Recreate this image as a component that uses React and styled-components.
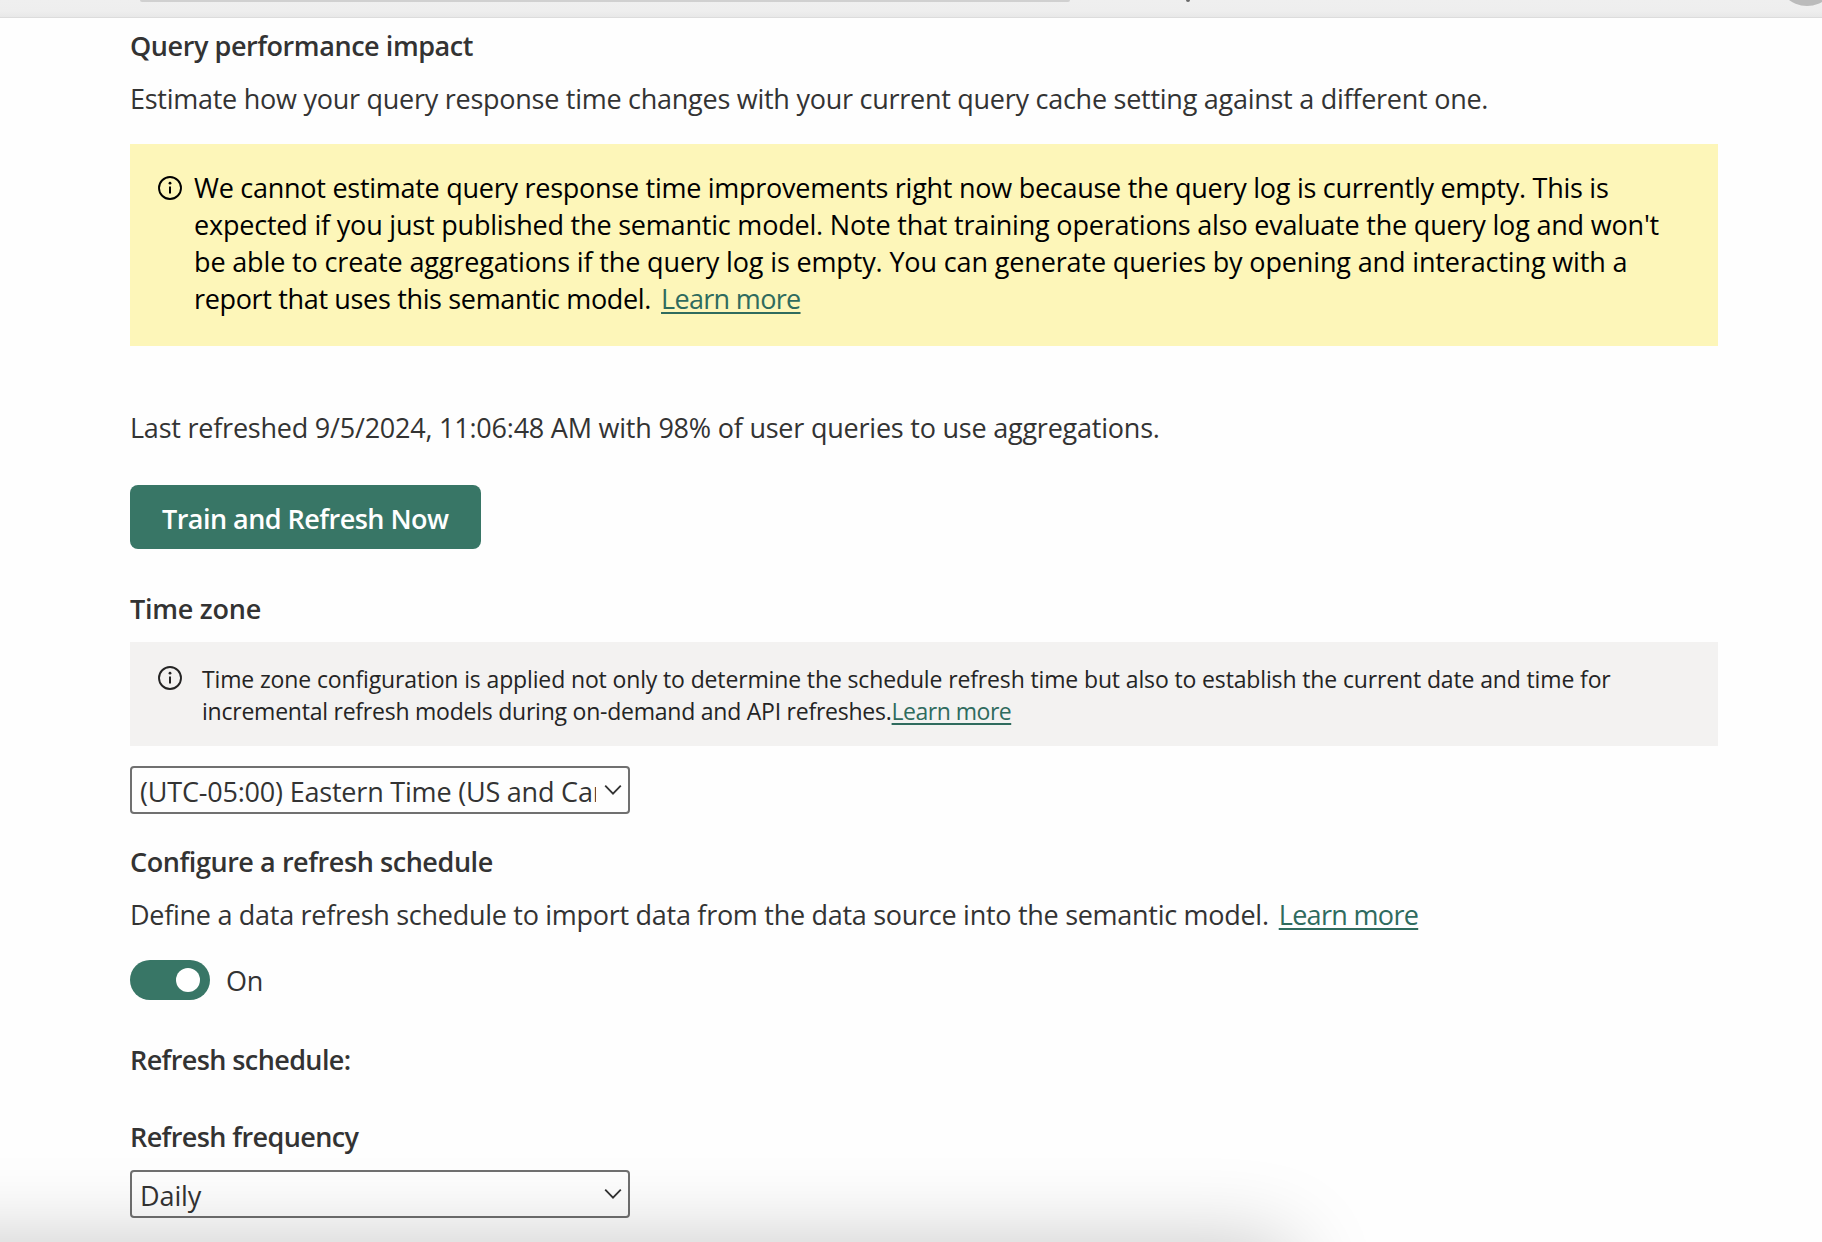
import React, { useState } from 'react';
import styled, { createGlobalStyle } from 'styled-components';

const GlobalStyle = createGlobalStyle`
  * { box-sizing: border-box; }
  html, body { margin: 0; padding: 0; background: #fefefe; }
  body {
    font-family: 'Open Sans', 'Noto Sans', sans-serif;
    font-size: 27px;
    line-height: 37px;
    color: #333333;
  }
`;

const Page = styled.div`
  position: relative;
  height: 1242px;
  overflow: hidden;
  display: flex;
  flex-direction: column;
`;

const TopBar = styled.header`
  flex: none;
  display: flex;
  align-items: flex-start;
  height: 18px;
  padding-left: 140px;
  background: linear-gradient(#efefef 0, #eeeeee 11px, #e8e8e8 17px);
  border-bottom: 1px solid #dcdcdc;
  position: relative;
`;

const AddressField = styled.div`
  width: 930px;
  height: 2px;
  background: #d0d0d0;
  border-radius: 0 0 6px 6px;
`;

const BarGlyph = styled.div`
  width: 4px;
  height: 2px;
  margin-left: 116px;
  background: #6a6a6a;
  border-radius: 0 0 2px 2px;
`;

const ProfileAvatar = styled.div`
  position: absolute;
  top: -54px;
  left: 1777px;
  width: 60px;
  height: 60px;
  border-radius: 50%;
  background: #bbbbbb;
`;

const BarClip = styled.div`
  position: absolute;
  inset: 0;
  overflow: hidden;
`;

const Content = styled.main`
  display: flex;
  flex-direction: column;
  align-items: flex-start;
  width: 1718px;
  padding: 9px 0 0 130px;
`;

const Heading = styled.h2`
  margin: ${(p) => p.$top || 0}px 0 0;
  font-size: 27px;
  line-height: 37px;
  font-weight: 600;
  letter-spacing: ${(p) => p.$track}px;
  white-space: nowrap;
`;

const Paragraph = styled.p`
  display: flex;
  margin: ${(p) => p.$top}px 0 0;
  letter-spacing: ${(p) => p.$track}px;
  white-space: nowrap;
`;

const Link = styled.a`
  margin-left: ${(p) => p.$gap || 0}px;
  color: #2f6b5e;
  letter-spacing: ${(p) => p.$track}px;
  text-decoration: underline;
  text-decoration-thickness: 2px;
  text-underline-offset: 3px;
  text-decoration-skip-ink: none;
`;

const Notice = styled.section`
  display: flex;
  align-items: flex-start;
  align-self: stretch;
  gap: 12px;
  height: 202px;
  margin-top: 27px;
  padding: 25px 28px;
  background: #fdf6b9;
  color: #000000;
`;

const Hint = styled(Notice)`
  gap: 20px;
  height: 104px;
  margin-top: 15px;
  padding: 21px 28px;
  background: #f3f2f1;
  color: #242424;
  font-size: 23px;
  line-height: 32px;
`;

const IconBox = styled.svg`
  flex: none;
  width: 24px;
  height: 24px;
  margin-top: ${(p) => p.$top}px;
`;

const Lines = styled.div`
  display: flex;
  flex-direction: column;
`;

const Line = styled.span`
  letter-spacing: ${(p) => p.$track}px;
  white-space: nowrap;
`;

const PrimaryButton = styled.button`
  width: 351px;
  height: 64px;
  margin-top: 39px;
  padding: 2px 0 0 32px;
  border: 0;
  border-radius: 8px;
  background: #387666;
  color: #ffffff;
  font: inherit;
  font-weight: 600;
  letter-spacing: -0.53px;
  text-align: left;
  white-space: nowrap;
`;

const SelectBox = styled.div`
  display: flex;
  align-items: center;
  justify-content: space-between;
  width: 500px;
  height: 48px;
  margin-top: ${(p) => p.$top}px;
  padding: 0 6px 0 8px;
  border: 2px solid #707070;
  border-radius: 4px;
`;

const SelectValue = styled.span`
  width: 456px;
  padding-top: 2px;
  overflow: hidden;
  letter-spacing: ${(p) => p.$track}px;
  white-space: nowrap;
`;

const ChevronIcon = styled.svg`
  flex: none;
  width: 18px;
  height: 12px;
`;

const ToggleRow = styled.div`
  display: flex;
  align-items: center;
  gap: 16px;
  height: 40px;
  margin-top: 27px;
`;

const ToggleTrack = styled.button`
  display: flex;
  align-items: center;
  justify-content: ${(p) => (p.$on ? 'flex-end' : 'flex-start')};
  width: 80px;
  height: 40px;
  padding: 0 10px;
  border: 0;
  border-radius: 20px;
  background: ${(p) => (p.$on ? '#387666' : '#8a8886')};
`;

const ToggleKnob = styled.span`
  width: 24px;
  height: 24px;
  border-radius: 50%;
  background: #ffffff;
`;

const ToggleLabel = styled.span`
  padding-top: 1px;
  letter-spacing: -0.3px;
`;

/* Soft shadow of the window docked under the page's lower edge. */
const DockShadow = styled.div`
  position: absolute;
  top: 1254px;
  left: -200px;
  width: 1492px;
  height: 300px;
  border-radius: 20px;
  box-shadow: 0 -12px 84px rgba(0, 0, 0, 0.22);
  pointer-events: none;
`;

const InfoIcon = ({ top }) => (
  <IconBox $top={top} viewBox="0 0 24 24" fill="none">
    <circle cx="12" cy="12" r="11" stroke="currentColor" strokeWidth="1.9" />
    <circle cx="12" cy="7.2" r="1.4" fill="currentColor" />
    <path d="M12 10.4v7" stroke="currentColor" strokeWidth="2" />
  </IconBox>
);

const Select = ({ top, track, children }) => (
  <SelectBox $top={top}>
    <SelectValue $track={track}>{children}</SelectValue>
    <ChevronIcon viewBox="0 0 18 12" fill="none">
      <path d="M1.2 1.6 9 9.6l7.8-8" stroke="#333333" strokeWidth="1.8" />
    </ChevronIcon>
  </SelectBox>
);

export default function App() {
  const [on, setOn] = useState(true);
  return (
    <Page>
      <GlobalStyle />
      <TopBar>
        <AddressField />
        <BarGlyph />
        <BarClip>
          <ProfileAvatar />
        </BarClip>
      </TopBar>
      <Content>
        <Heading $track={-0.43}>Query performance impact</Heading>
        <Paragraph $top={16} $track={-0.262}>
          Estimate how your query response time changes with your current query cache setting against a different one.
        </Paragraph>
        <Notice>
          <InfoIcon top={7} />
          <Lines>
            <Line $track={-0.265}>
              We cannot estimate query response time improvements right now because the query log is currently empty. This is
            </Line>
            <Line $track={-0.197}>
              expected if you just published the semantic model. Note that training operations also evaluate the query log and won't
            </Line>
            <Line $track={-0.144}>
              be able to create aggregations if the query log is empty. You can generate queries by opening and interacting with a
            </Line>
            <Line $track={-0.34}>
              report that uses this semantic model.
              <Link $gap={10} $track={-0.68}>Learn more</Link>
            </Line>
          </Lines>
        </Notice>
        <Paragraph $top={63} $track={-0.223}>
          Last refreshed 9/5/2024, 11:06:48 AM with 98% of user queries to use aggregations.
        </Paragraph>
        <PrimaryButton>Train and Refresh Now</PrimaryButton>
        <Heading $top={41} $track={-0.25}>Time zone</Heading>
        <Hint>
          <InfoIcon top={3} />
          <Lines>
            <Line $track={-0.137}>
              Time zone configuration is applied not only to determine the schedule refresh time but also to establish the current date and time for
            </Line>
            <Line $track={-0.235}>
              incremental refresh models during on-demand and API refreshes.
              <Link $track={-0.5}>Learn more</Link>
            </Line>
          </Lines>
        </Hint>
        <Select top={20} track={-0.2}>(UTC-05:00) Eastern Time (US and Canada)</Select>
        <Heading $top={29} $track={-0.43}>Configure a refresh schedule</Heading>
        <Paragraph $top={16} $track={-0.283}>
          Define a data refresh schedule to import data from the data source into the semantic model.
          <Link $gap={10} $track={-0.68}>Learn more</Link>
        </Paragraph>
        <ToggleRow>
          <ToggleTrack $on={on} onClick={() => setOn(!on)}>
            <ToggleKnob />
          </ToggleTrack>
          <ToggleLabel>{on ? 'On' : 'Off'}</ToggleLabel>
        </ToggleRow>
        <Heading $top={41} $track={-0.6}>Refresh schedule:</Heading>
        <Heading $top={40} $track={-0.6}>Refresh frequency</Heading>
        <Select top={15} track={-0.1}>Daily</Select>
      </Content>
      <DockShadow />
    </Page>
  );
}
